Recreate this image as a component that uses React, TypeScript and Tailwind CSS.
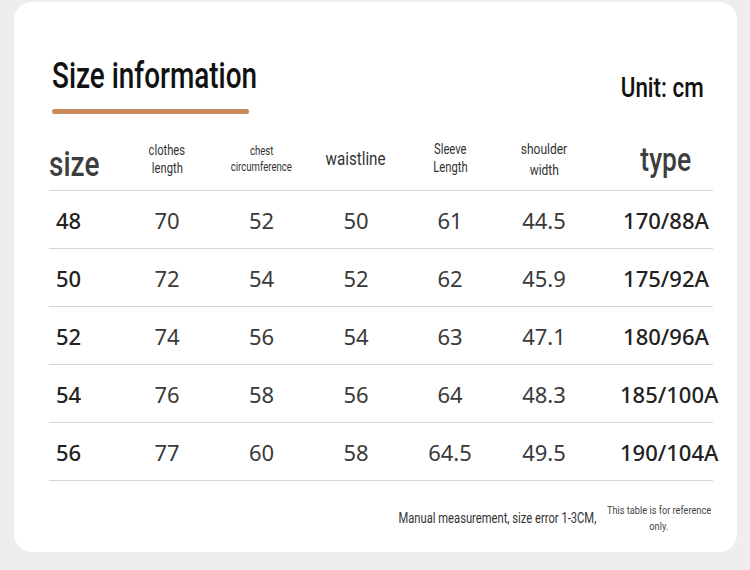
import type { ReactNode } from 'react'

const rows = [
  ['48', '70', '52', '50', '61', '44.5', '170/88A'],
  ['50', '72', '54', '52', '62', '45.9', '175/92A'],
  ['52', '74', '56', '54', '63', '47.1', '180/96A'],
  ['54', '76', '58', '56', '64', '48.3', '185/100A'],
  ['56', '77', '60', '58', '64.5', '49.5', '190/104A'],
]

const num = "font-['Noto_Sans',sans-serif]"

// no condensed face installed, so squeeze Roboto horizontally
function Cond({ children, className = 'scale-x-[0.8]' }: { children: ReactNode; className?: string }) {
  return (
    <span className={`inline-block whitespace-nowrap font-['Roboto',sans-serif] ${className}`}>
      {children}
    </span>
  )
}

export default function App() {
  return (
    <div className="h-[570px] w-[750px] bg-[#eeeeee] pt-[2px] pl-[14px]">
      <div className="h-[550px] w-[723px] rounded-[18px] bg-white pt-[50px] pl-[35px]">
        <div className="flex w-[655px] items-start justify-between">
          <div className="pl-[3px]">
            <h1 className="text-[36px] leading-[46px] font-medium text-[#111]">
              <Cond className="origin-left scale-x-[0.775]">Size information</Cond>
            </h1>
            <div className="mt-[10px] h-[5px] w-[197px] rounded-full bg-[#c98a5c]" />
          </div>
          <div className="mt-[16px] text-[28px] leading-[36px] font-medium text-[#111]">
            <Cond className="origin-right scale-x-[0.8]">Unit: cm</Cond>
          </div>
        </div>

        <div className="mt-[19px] w-[664px]">
          <div className="flex h-[58px] items-center border-b border-[#d9d6cc] pb-[6px] text-[#333]">
            <div className="w-[70px] pt-[10px] text-[35px] leading-none font-medium text-[#3d3d3d]">
              <Cond className="origin-left scale-x-[0.8]">size</Cond>
            </div>
            <div className="w-[96px] text-center text-[14px] leading-[17px]">
              <Cond>clothes</Cond>
              <br />
              <Cond>length</Cond>
            </div>
            <div className="w-[93px] text-center text-[12px] leading-[16px]">
              <Cond>chest</Cond>
              <br />
              <Cond>circumference</Cond>
            </div>
            <div className="w-[96px] text-center text-[19px] leading-none">
              <Cond>waistline</Cond>
            </div>
            <div className="w-[92px] pb-[2px] text-center text-[14px] leading-[18px]">
              <Cond>Sleeve</Cond>
              <br />
              <Cond>Length</Cond>
            </div>
            <div className="w-[96px] pt-[1px] text-center text-[15px] leading-[20px]">
              <Cond>shoulder</Cond>
              <br />
              <Cond>width</Cond>
            </div>
            <div className="w-[120px] pl-[28px] text-center text-[33px] leading-none font-medium text-[#3d3d3d]">
              <Cond>type</Cond>
            </div>
          </div>
          {rows.map((r) => (
            <div key={r[0]} className={`${num} flex h-[58px] items-center border-b border-[#d9d6cc] pt-[2px] text-[22px] text-[#3a3a3a]`}>
              <div className="w-[70px] pl-[7px] font-medium text-[#222]">{r[0]}</div>
              <div className="w-[96px] text-center">{r[1]}</div>
              <div className="w-[93px] text-center">{r[2]}</div>
              <div className="w-[96px] text-center">{r[3]}</div>
              <div className="w-[92px] text-center">{r[4]}</div>
              <div className="w-[96px] text-center">{r[5]}</div>
              <div className="w-[120px] pl-[28px] text-center font-medium whitespace-nowrap text-[#222]">{r[6]}</div>
            </div>
          ))}
        </div>

        <div className="mt-[21px] flex w-[664px] items-center justify-end text-[#333]">
          <div className="text-[14px] leading-[20px]">
            <Cond className="origin-right scale-x-[0.8]">Manual measurement, size error 1-3CM,</Cond>
          </div>
          <div className="ml-[9px] flex w-[108px] flex-col items-center text-[11.5px] leading-[16px] text-[#444]">
            <Cond>This table is for reference</Cond>
            <Cond>only.</Cond>
          </div>
        </div>
      </div>
    </div>
  )
}
